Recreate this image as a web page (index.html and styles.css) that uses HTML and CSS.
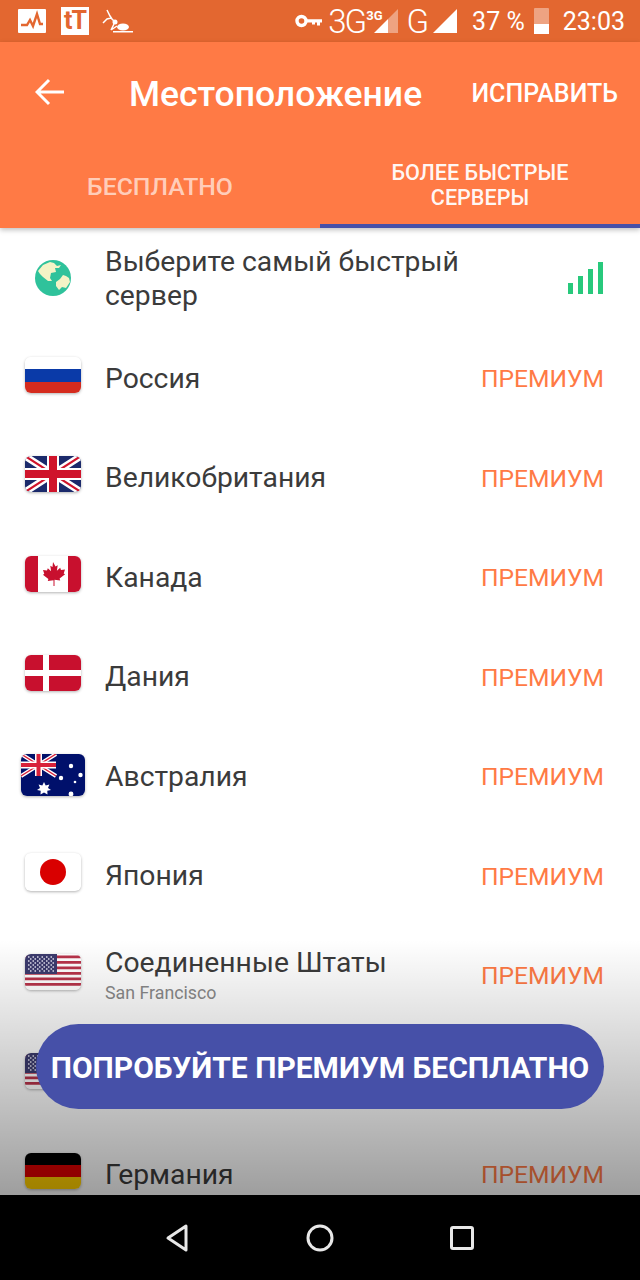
FILE: index.html

```html
<!DOCTYPE html>
<html>
<head>
    <title>Местоположение</title>
    <link rel="stylesheet" href="styles.css">
</head>
<body>
    <svg class="defs" width="0" height="0">
        <defs>
            <symbol id="flag-us" viewBox="0 0 56 36">
                <rect width="56" height="36" fill="#fff"/>
                <path d="M0 1.5h56v2.8H0zM0 7h56v2.8H0zM0 12.5h56v2.8H0zM0 18h56v2.8H0zM0 23.5h56v2.8H0zM0 29h56v2.8H0z" fill="#b8334a"/>
                <rect width="32" height="20" fill="#3c3b6e"/>
                <path d="M3 3h26M3 7h26M3 11h26M3 15h26" stroke="#dfe0ee" stroke-width="1.5" stroke-dasharray="1.5 3"/>
                <path d="M5 5h24M5 9h24M5 13h24M5 17h24" stroke="#dfe0ee" stroke-width="1.5" stroke-dasharray="1.5 3"/>
            </symbol>
        </defs>
    </svg>

    <div class="screen">
        <div class="statusbar">
            <div class="status-left">
                <svg class="ic-pulse" viewBox="0 0 28 24"><rect width="28" height="24" rx="1" fill="#fff"/><path d="M3 16h6l3-5 3 6 4-12 3 10h3" fill="none" stroke="#e36730" stroke-width="2.4"/></svg>
                <span class="tt">tT</span>
                <svg class="ic-ant" viewBox="0 0 32 24"><path d="M5 1l3 6 2 3 3 3M1 14l4-4 4-1 3 3M12 15l-3 6M9 21l6-4" fill="none" stroke="#fff" stroke-width="1.5"/><circle cx="13" cy="13" r="2.500" fill="#fff"/><ellipse cx="21" cy="18" rx="6" ry="3.500" fill="#fff"/><path d="M11 22h20v1.500H11z" fill="#fff"/></svg>
            </div>
            <div class="status-right">
                <svg class="ic-key" viewBox="0 0 28 14"><circle cx="6.500" cy="7" r="4.500" fill="none" stroke="#fff" stroke-width="3.400"/><path d="M11 5.200h16v3.400h-2v3h-3v-3h-2v2h-3v-2h-6z" fill="#fff"/></svg>
                <span class="net">3G</span>
                <span class="net-small">3G</span>
                <svg class="ic-signal ic-signal-first" viewBox="0 0 24 24"><path d="M24 0v24H14V10z" fill="#fff" opacity=".4"/><path d="M14 10v14H0z" fill="#fff"/></svg>
                <span class="net net-g">G</span>
                <svg class="ic-signal" viewBox="0 0 24 24"><path d="M24 0v24H0z" fill="#fff"/></svg>
                <span class="percent">37 %</span>
                <div class="battery"><div class="battery-fill"></div></div>
                <span class="clock">23:03</span>
            </div>
        </div>

        <div class="header">
            <div class="toolbar">
                <svg class="ic-back" viewBox="0 0 30 28"><path d="M14 2L2 14l12 12M2 14h27" fill="none" stroke="#fff" stroke-width="3"/></svg>
                <h1 class="title">Местоположение</h1>
                <span class="fix">ИСПРАВИТЬ</span>
            </div>
            <div class="tabs">
                <div class="tab">БЕСПЛАТНО</div>
                <div class="tab tab-active">БОЛЕЕ БЫСТРЫЕ<br>СЕРВЕРЫ</div>
            </div>
        </div>

        <div class="content">
            <div class="list">
                <div class="row">
                    <div class="flag-box">
                        <svg class="globe" viewBox="0 0 36 36">
                            <circle cx="18" cy="18" r="18" fill="#2fc29b"/>
                            <path d="M3 11l5-6 7-3 4 1 3 3 4-1-2 3-4 0 1 4-5 1-1 5 2 3-4 0-5-4-3-3z" fill="#f4f3c6"/>
                            <path d="M21 22l4-3 3-4 3 1 3 2 1 4-4 6-4-1-3 3-3-4z" fill="#f4f3c6"/>
                        </svg>
                    </div>
                    <div class="name name-wrap">Выберите самый быстрый сервер</div>
                    <svg class="bars" viewBox="0 0 36 32"><path d="M0 21h5v11H0zM10 14h5v18h-5zM20 7h5v25h-5zM30 0h5v32h-5z" fill="#28c97c"/></svg>
                </div>

                <div class="row">
                    <div class="flag-box">
                        <svg class="flag" viewBox="0 0 56 36"><rect width="56" height="12" fill="#fff"/><rect y="12" width="56" height="13" fill="#0a3aa8"/><rect y="25" width="56" height="11" fill="#d52b1e"/></svg>
                    </div>
                    <div class="name">Россия</div>
                    <div class="premium">ПРЕМИУМ</div>
                </div>

                <div class="row">
                    <div class="flag-box">
                        <svg class="flag" viewBox="0 0 56 36">
                            <rect width="56" height="36" fill="#1b2a6b"/>
                            <path d="M0 0l56 36M56 0L0 36" stroke="#fff" stroke-width="7"/>
                            <path d="M0 0l56 36M56 0L0 36" stroke="#cf142b" stroke-width="2.200"/>
                            <path d="M28 0v36M0 18h56" stroke="#fff" stroke-width="12"/>
                            <path d="M28 0v36M0 18h56" stroke="#cf142b" stroke-width="8"/>
                        </svg>
                    </div>
                    <div class="name">Великобритания</div>
                    <div class="premium">ПРЕМИУМ</div>
                </div>

                <div class="row">
                    <div class="flag-box">
                        <svg class="flag" viewBox="0 0 56 36">
                            <rect width="56" height="36" fill="#fff"/>
                            <rect width="13" height="36" fill="#c8102e"/>
                            <rect x="43" width="13" height="36" fill="#c8102e"/>
                            <path d="M28 6l2.500 4.500 2.200-1.200-.8 5.500 3.300-3 .8 2.200 4-.6-1.300 4 1.400.8-5.500 4.400.6 2-5.700-.8V30h-1v-5.700l-5.700.8.6-2-5.500-4.400 1.400-.8-1.300-4 4 .6.8-2.200 3.300 3-.8-5.500 2.200 1.200z" fill="#c8102e"/>
                        </svg>
                    </div>
                    <div class="name">Канада</div>
                    <div class="premium">ПРЕМИУМ</div>
                </div>

                <div class="row">
                    <div class="flag-box">
                        <svg class="flag" viewBox="0 0 56 36"><rect width="56" height="36" fill="#c8102e"/><rect x="18" width="6" height="36" fill="#fff"/><rect y="15" width="56" height="6" fill="#fff"/></svg>
                    </div>
                    <div class="name">Дания</div>
                    <div class="premium">ПРЕМИУМ</div>
                </div>

                <div class="row">
                    <div class="flag-box">
                        <svg class="flag flag-au" viewBox="0 0 64 42">
                            <rect width="64" height="42" fill="#00106b"/>
                            <path d="M0 0l35 22M35 0L0 22" stroke="#fff" stroke-width="4"/>
                            <path d="M0 0l35 22M35 0L0 22" stroke="#d8213a" stroke-width="1.400"/>
                            <path d="M17.500 0v22M0 11h35" stroke="#fff" stroke-width="7"/>
                            <path d="M17.500 0v22M0 11h35" stroke="#d8213a" stroke-width="4"/>
                            <path d="M23 28l1.700 3.400 3.700-1-1.400 3.500 3 2.200-3.700.7.2 3.700-3.500-2-3.500 2 .2-3.700-3.700-.7 3-2.200-1.400-3.500 3.700 1z" fill="#fff"/>
                            <circle cx="50" cy="12" r="2.200" fill="#fff"/>
                            <circle cx="40" cy="24" r="2.200" fill="#fff"/>
                            <circle cx="59.500" cy="21" r="2.200" fill="#fff"/>
                            <circle cx="54" cy="28" r="1.300" fill="#fff"/>
                            <circle cx="50" cy="40" r="2.400" fill="#fff"/>
                        </svg>
                    </div>
                    <div class="name">Австралия</div>
                    <div class="premium">ПРЕМИУМ</div>
                </div>

                <div class="row">
                    <div class="flag-box">
                        <svg class="flag flag-jp" viewBox="0 0 56 36"><rect width="56" height="36" fill="#fff"/><circle cx="28" cy="18" r="13" fill="#d90000"/></svg>
                    </div>
                    <div class="name">Япония</div>
                    <div class="premium">ПРЕМИУМ</div>
                </div>

                <div class="row">
                    <div class="flag-box">
                        <svg class="flag"><use href="#flag-us"/></svg>
                    </div>
                    <div class="name-group">
                        <div class="name">Соединенные Штаты</div>
                        <div class="sub">San Francisco</div>
                    </div>
                    <div class="premium">ПРЕМИУМ</div>
                </div>

                <div class="row">
                    <div class="flag-box">
                        <svg class="flag"><use href="#flag-us"/></svg>
                    </div>
                </div>

                <div class="row">
                    <div class="flag-box">
                        <svg class="flag" viewBox="0 0 56 36"><rect width="56" height="12" fill="#000"/><rect y="12" width="56" height="12" fill="#d00"/><rect y="24" width="56" height="12" fill="#ffce00"/></svg>
                    </div>
                    <div class="name">Германия</div>
                    <div class="premium">ПРЕМИУМ</div>
                </div>
            </div>

            <div class="fade"></div>
            <div class="cta">ПОПРОБУЙТЕ ПРЕМИУМ БЕСПЛАТНО</div>
        </div>

        <div class="navbar">
            <svg class="nav-ic" viewBox="0 0 30 30"><path d="M23 3v24L5 15z" fill="none" stroke="#e8e8e8" stroke-width="3" stroke-linejoin="round"/></svg>
            <svg class="nav-ic" viewBox="0 0 30 30"><circle cx="15" cy="15" r="12" fill="none" stroke="#e8e8e8" stroke-width="3"/></svg>
            <svg class="nav-ic" viewBox="0 0 30 30"><rect x="4.500" y="4.500" width="21" height="21" rx="1.500" fill="none" stroke="#e8e8e8" stroke-width="3"/></svg>
        </div>
    </div>
</body>
</html>
```

FILE: styles.css

```css
* {
	box-sizing: border-box;
}

body {
	margin: 0;
	padding: 0;
	background-color: #fff;
	font-family: Roboto, "Noto Sans", sans-serif;
}

.defs {
	position: absolute;
}

.screen {
	display: flex;
	flex-direction: column;
	width: 640px;
	height: 1280px;
	overflow: hidden;
}

.statusbar {
	display: flex;
	justify-content: space-between;
	align-items: center;
	flex: none;
	height: 42px;
	padding: 0 15px 0 18px;
	background-color: #e36730;
	color: #fff;
}

.status-left,
.status-right {
	display: flex;
	align-items: center;
}

.ic-pulse {
	width: 28px;
	height: 24px;
}

.tt {
	width: 28px;
	height: 28px;
	margin-left: 15px;
	background-color: #fff;
	color: #e36730;
	font-size: 25px;
	font-weight: 700;
	line-height: 27px;
	text-align: center;
	letter-spacing: -1px;
}

.ic-ant {
	width: 32px;
	height: 24px;
	margin-left: 13px;
}

.ic-key {
	width: 28px;
	height: 14px;
	margin-right: -6px;
}

.net {
	margin-left: 11px;
	font-size: 33px;
	font-weight: 300;
	letter-spacing: -2px;
}

.net-small {
	align-self: flex-start;
	margin: 7px 0 0 1px;
	font-size: 13px;
	font-weight: 700;
	line-height: 14px;
}

.net-g {
	margin-left: 9px;
}

.ic-signal {
	width: 24px;
	height: 24px;
	margin-left: 6px;
}

.ic-signal-first {
	margin-left: -9px;
}

.percent {
	margin-left: 15px;
	font-size: 25px;
}

.battery {
	position: relative;
	width: 15px;
	height: 26px;
	margin-left: 9px;
	background-color: rgba(255, 255, 255, 0.4);
	border-radius: 1px;
}

.battery-fill {
	position: absolute;
	left: 0;
	right: 0;
	bottom: 0;
	height: 10px;
	background-color: #fff;
}

.clock {
	margin-left: 14px;
	font-size: 25px;
}

.header {
	flex: none;
	height: 186px;
	background-color: #ff7a45;
	color: #fff;
	box-shadow: 0 2px 5px rgba(0, 0, 0, 0.25);
	position: relative;
	z-index: 1;
}

.toolbar {
	display: flex;
	align-items: center;
	height: 102px;
	padding: 0 22px 0 35px;
}

.ic-back {
	width: 30px;
	height: 28px;
	margin-top: -3px;
}

.title {
	margin: 2px 0 0 64px;
	font-size: 35.5px;
	font-weight: 500;
	white-space: nowrap;
}

.fix {
	margin-left: auto;
	font-size: 25px;
	font-weight: 500;
}

.tabs {
	display: flex;
	height: 84px;
}

.tab {
	display: flex;
	align-items: center;
	justify-content: center;
	width: 50%;
	color: rgba(255, 255, 255, 0.65);
	font-size: 24.8px;
	font-weight: 500;
	line-height: 25px;
	text-align: center;
}

.tab-active {
	padding-top: 2px;
	border-bottom: 4px solid #4650a8;
	color: rgba(255, 255, 255, 0.95);
	font-size: 21.6px;
}

.content {
	position: relative;
	flex: 1;
	min-height: 0;
	overflow: hidden;
}

.list {
	display: flex;
	flex-direction: column;
}

.row {
	display: flex;
	align-items: center;
	flex: none;
	height: 99.5px;
	padding-right: 36px;
}

.flag-box {
	display: flex;
	justify-content: center;
	flex: none;
	width: 105px;
	margin-top: -5px;
}

.flag {
	display: block;
	width: 56px;
	height: 36px;
	border-radius: 6px;
	box-shadow: 0 1px 3px rgba(0, 0, 0, 0.3);
}

.flag-au {
	width: 64px;
	height: 42px;
	margin-top: 5px;
}

.flag-jp {
	height: 38px;
}

.globe {
	width: 36px;
	height: 36px;
	margin-top: 5px;
}

.name {
	color: #3b3b3b;
	font-size: 28.3px;
	line-height: 34px;
	padding-top: 3px;
}

.name-wrap {
	width: 400px;
}

.name-group {
	margin-top: 1px;
}

.sub {
	color: #8a8a8a;
	font-size: 17.8px;
	line-height: 26px;
}

.bars {
	width: 36px;
	height: 32px;
	margin-left: auto;
}

.premium {
	margin-left: auto;
	padding-top: 3px;
	color: #ff7a45;
	font-size: 24.6px;
}

.fade {
	position: absolute;
	left: 0;
	right: 0;
	bottom: 0;
	height: 255px;
	background: linear-gradient(to bottom, rgba(0, 0, 0, 0), rgba(0, 0, 0, 0.38));
}

.cta {
	position: absolute;
	left: 36px;
	top: 796px;
	width: 568px;
	height: 85px;
	border-radius: 43px;
	background-color: #4650a8;
	color: #fff;
	font-size: 30px;
	font-weight: 700;
	line-height: 88px;
	text-align: center;
	white-space: nowrap;
}

.navbar {
	display: flex;
	justify-content: space-between;
	align-items: center;
	flex: none;
	height: 85px;
	padding: 0 163px;
	background-color: #000;
}

.nav-ic {
	width: 30px;
	height: 30px;
}
```
